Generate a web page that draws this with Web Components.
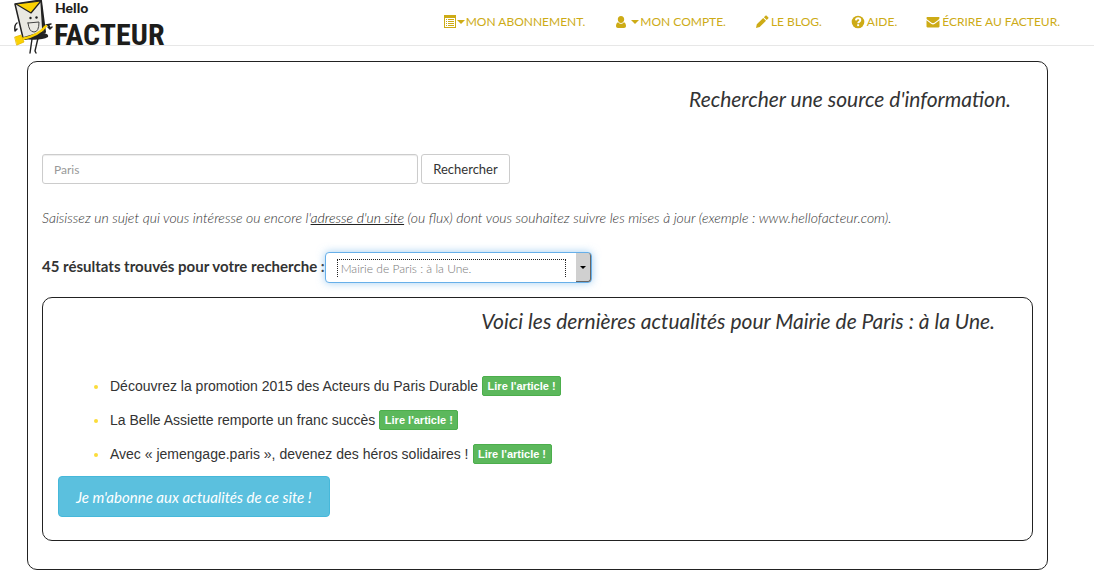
<!DOCTYPE html>
<html lang="fr">
<head>
<meta charset="utf-8">
<title>Hello Facteur</title>
<style>
body { margin: 0; background: #fff; color: #333; font: 14px/20px Lato, "Liberation Sans", sans-serif; }
</style>
</head>
<body>
<site-header>
  <nav-item icon="list" caret>MON ABONNEMENT.</nav-item>
  <nav-item icon="user" caret>MON COMPTE.</nav-item>
  <nav-item icon="pencil">LE BLOG.</nav-item>
  <nav-item icon="help">AIDE.</nav-item>
  <nav-item icon="mail">ÉCRIRE AU FACTEUR.</nav-item>
</site-header>
<main>
  <framed-panel heading="Rechercher une source d'information.">
    <search-form></search-form>
    <result-picker></result-picker>
    <framed-panel inner heading="Voici les dernières actualités pour Mairie de Paris : à la Une.">
      <news-list></news-list>
      <subscribe-button>Je m'abonne aux actualités de ce site !</subscribe-button>
    </framed-panel>
  </framed-panel>
</main>
<script>
const define = (name, html, setup) => customElements.define(name, class extends HTMLElement {
  connectedCallback() {
    if (this.shadowRoot) return;
    const t = document.createElement('template');
    t.innerHTML = html;
    this.attachShadow({ mode: 'open' }).append(t.content.cloneNode(true));
    if (setup) setup(this, this.shadowRoot);
  }
});

const icons = {
  list: '<path fill-rule="evenodd" d="M1 0h12v13H1zM2 3v9h10V3zM3 4h1v1H3zM5 4h6v1H5zM3 6h1v1H3zM5 6h6v1H5zM3 8h1v1H3zM5 8h6v1H5zM3 10h1v1H3zM5 10h6v1H5z"/>',
  user: '<path d="M7 1c2 0 3.2 1.400 3.200 3.300S9 8 7 8 3.800 6.200 3.800 4.300 5 1 7 1zM4.200 7.200C5 8.200 6 8.700 7 8.700s2-.5 2.800-1.500C11.500 7.700 12 9.500 12 11c0 1.200-.8 2-2 2H4c-1.200 0-2-.8-2-2 0-1.500.5-3.300 2.200-3.800z"/>',
  pencil: '<path d="M1 13l.8-3.700L8.200 3l2.800 2.800-6.300 6.300zM8.900 2.300L10.400.8c.4-.4.9-.4 1.300 0l1.500 1.500c.4.4.4.9 0 1.300l-1.500 1.500z"/>',
  help: '<circle cx="7" cy="7" r="6.300"/><path d="M4.900 5.400C5 3.900 6 3.300 7.100 3.300c1.300 0 2.200.8 2.200 1.900 0 1.600-2.100 1.500-2.100 3" fill="none" stroke="#fff" stroke-width="1.900"/><path d="M6.200 9.200h1.900v1.900H6.200z" fill="#fff"/>',
  mail: '<path d="M1.200 2h11.600c.4 0 .7.400.7.800 0 .9-.7 1.700-1.400 2.200L8.400 7.700c-.9.600-1.900.6-2.800 0L1.900 5C1.200 4.500.5 3.900.5 2.900c0-.5.3-.9.7-.9zM.5 5.300l4.600 3.400c1.200.9 2.600.9 3.800 0l4.600-3.400v6c0 .7-.4 1.100-1 1.100h-11c-.6 0-1-.4-1-1.100z"/>'
};

define('nav-item', `<style>
:host { display: block; }
a { display: flex; align-items: center; color: #cdab16; font-size: 12px; line-height: 20px; text-decoration: none; white-space: nowrap; }
svg { width: 14px; height: 14px; fill: currentColor; margin-right: 2px; }
i { display: none; border: 4px solid transparent; border-top-color: currentColor; border-bottom: 0; margin-right: 1px; }
:host([caret]) svg { margin-right: 0; }
:host([caret]) i { display: block; }
:host([icon="user"]) svg { margin-right: 3px; }
</style><a href="#"><svg viewBox="0 0 14 14" aria-hidden="true"></svg><i></i><slot></slot></a>`,
(el, root) => { root.querySelector('svg').innerHTML = icons[el.getAttribute('icon')]; });

define('site-header', `<style>
:host { display: flex; justify-content: space-between; align-items: flex-start; height: 45px; border-bottom: 1px solid #e7e7e7; }
.brand { margin-left: 12px; height: 45px; }
svg { display: block; overflow: visible; }
nav { display: flex; gap: 29px; padding: 12px 34px 0 0; }
</style>
<a class="brand" href="#" aria-label="Hello Facteur"><svg width="160" height="55" viewBox="0 0 160 55">
<g stroke-linecap="round" stroke-linejoin="round">
<path d="M20 39l-2 14M26 38l-3 13 1 2" fill="none" stroke="#222" stroke-width="1.400"/>
<path d="M34 25l5-1M35 25q3 0 3 4l-2-2m2 2l2-2M5 23q-3 2-2 8l2-2" fill="none" stroke="#222" stroke-width="1.500"/>
<path d="M32 33q5 1 4 4-7 4-25 2z" fill="#222"/>
<path d="M29 1l4 31-20 7" fill="#f5cc00" stroke="#222" stroke-width="2"/>
<path d="M3 4L29 0l2 32-20 6z" fill="#e9e8e2" stroke="#222" stroke-width="1.500"/>
<path d="M4 4L29 1 19 13z" fill="#fbd202" stroke="#222" stroke-width="1.200"/>
<path d="M34 26Q26 36 10 39" fill="none" stroke="#fbd202" stroke-width="2.500"/>
<path d="M3 37l6-2 3 7-7 3z" fill="#fbd202" stroke="#e5b700" stroke-width=".8"/>
<circle cx="18.500" cy="18" r="1.200" fill="#222"/><circle cx="24.500" cy="17.500" r="1.200" fill="#222"/>
<path d="M16 23l11-1q0 10-5 10-5 0-6-9z" fill="#e9e8e2" stroke="#444" stroke-width="1"/>
</g>
<text x="43" y="13" fill="#1d1d1b" font-family="Lato, sans-serif" font-weight="900" font-size="14">Hello</text>
<text x="42" y="45" fill="#1d1d1b" font-family="'Roboto Condensed', 'Liberation Sans Narrow', Lato, sans-serif" font-weight="700" font-size="30">FACTEUR</text>
</svg></a>
<nav><slot></slot></nav>`);

define('framed-panel', `<style>
:host { display: block; box-sizing: border-box; margin: 15px 46px 0 27px; padding: 22px 14px 28px; border: 1px solid #222; border-radius: 10px; }
:host([inner]) { margin: 14px 0 0; padding: 8px 15px 23px; }
h2 { margin: 0 22px 40px 0; font-size: 21px; line-height: 30px; font-weight: 400; font-style: italic; text-align: right; }
</style><h2></h2><slot></slot>`,
(el, root) => { root.querySelector('h2').textContent = el.getAttribute('heading'); });

define('search-form', `<style>
:host { display: block; }
form { display: flex; gap: 3px; }
input { box-sizing: border-box; width: 376px; height: 30px; padding: 0 11px; border: 1px solid #ccc; border-radius: 3px; box-shadow: inset 0 1px 1px rgba(0,0,0,.075); font: 12px/18px Lato, sans-serif; color: #999; }
button { box-sizing: border-box; width: 89px; height: 30px; padding: 0; border: 1px solid #ccc; border-radius: 3px; background: #fff; color: #333; font: 13px/20px Lato, sans-serif; }
p { margin: 24px 0; font-size: 14px; line-height: 20px; font-style: italic; font-weight: 300; color: #333; }
a { color: #222; text-decoration: underline; }
</style>
<form onsubmit="return false"><input type="text" aria-label="Sujet" value="Paris"><button>Rechercher</button></form>
<p>Saisissez un sujet qui vous intéresse ou encore l'<a href="#">adresse d'un site</a> (ou flux) dont vous souhaitez suivre les mises à jour (exemple : www.hellofacteur.com).</p>`);

define('result-picker', `<style>
:host { display: flex; align-items: center; }
label { font-weight: 700; font-size: 15px; padding-bottom: 4px; }
.field { position: relative; }
select { display: block; box-sizing: border-box; width: 267px; height: 31px; padding: 2px 30px 0 15px; border: 1px solid #66afe9; border-radius: 4px; box-shadow: 0 0 8px rgba(102,175,233,.6); appearance: none; background: #fff; color: #777; font: 300 12px/18px Lato, sans-serif; outline: 0; }
.field::before { content: ""; position: absolute; left: 12px; top: 7px; width: 227px; height: 17px; border: 1px dotted #222; border-bottom: 0; pointer-events: none; }
.arrow { position: absolute; right: 1px; top: 1px; bottom: 1px; width: 15px; box-sizing: border-box; background: #d0d0d0; border: solid #666; border-width: 0 1px 1px 0; border-radius: 0 3px 3px 0; display: flex; align-items: center; justify-content: center; pointer-events: none; }
.arrow::after { content: ""; border: 3px solid transparent; border-top-color: #000; border-bottom: 0; }
</style>
<label for="source">45 résultats trouvés pour votre recherche :</label>
<div class="field"><select id="source"><option>Mairie de Paris : à la Une.</option></select><span class="arrow"></span></div>`);

define('news-entry', `<style>
:host { display: flex; align-items: center; height: 20px; font: 14px/20px "Liberation Sans", sans-serif; }
:host::before { content: ""; width: 4px; height: 4px; border-radius: 50%; background: #fbdc3a; margin: 2px 12px 0 0; }
button { box-sizing: border-box; width: 79px; height: 20px; margin: 0 0 0 4px; padding: 0; border: 1px solid #4cae4c; border-radius: 2px; background: #5cb85c; color: #fff; font: 700 11px/18px "Liberation Sans", sans-serif; white-space: nowrap; }
</style><span><slot></slot></span><button>Lire l'article !</button>`);

define('news-list', `<style>
:host { display: grid; gap: 14px; padding: 0 0 12px 36px; }
</style>
<news-entry role="listitem">Découvrez la promotion 2015 des Acteurs du Paris Durable</news-entry>
<news-entry role="listitem">La Belle Assiette remporte un franc succès</news-entry>
<news-entry role="listitem">Avec « jemengage.paris », devenez des héros solidaires !</news-entry>`,
el => el.setAttribute('role', 'list'));

define('subscribe-button', `<style>
:host { display: block; }
button { box-sizing: border-box; display: block; height: 41px; padding: 0 17px; border: 1px solid #46b8da; border-radius: 4px; background: #5bc0de; color: #fff; font: italic 15px/24px Lato, sans-serif; white-space: nowrap; }
</style><button><slot></slot></button>`);
</script>
</body>
</html>
